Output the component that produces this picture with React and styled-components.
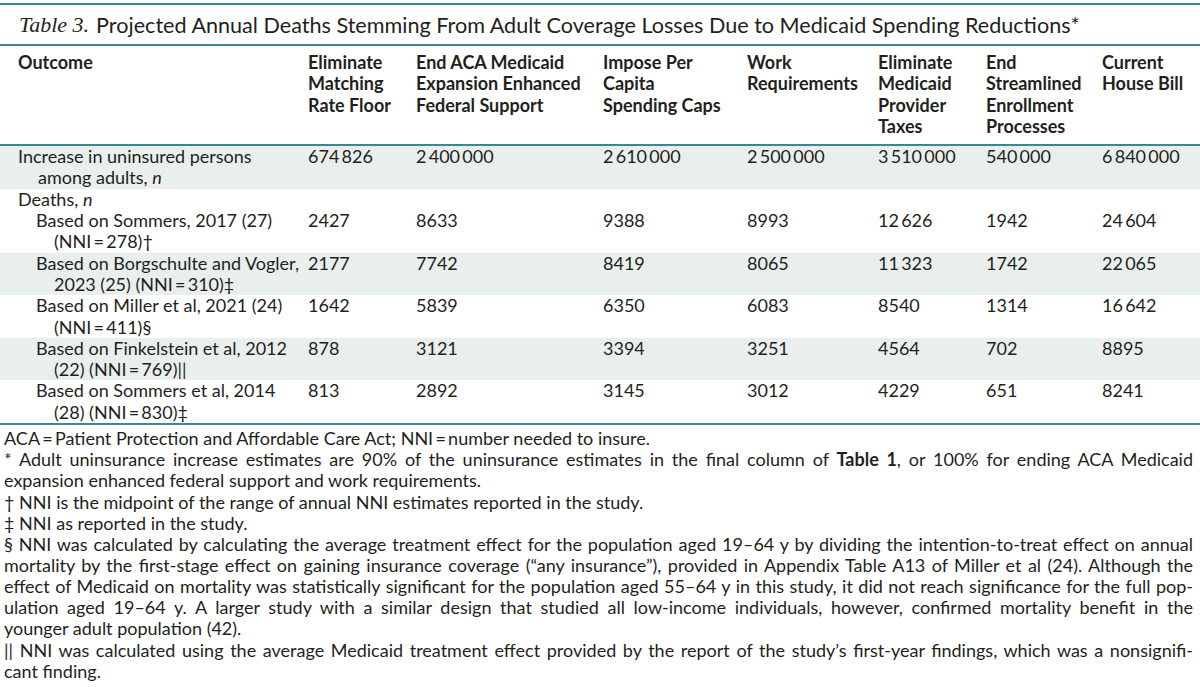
import React from 'react';
import styled, { createGlobalStyle } from 'styled-components';

const TEAL = '#3a8792';
const SHADE = '#e8efed';
const INK = '#231f20';

const Global = createGlobalStyle`
  html, body { margin: 0; padding: 0; background: #ffffff; }
  body { font-family: Lato, "Noto Sans", sans-serif; color: ${INK}; }
`;

const Page = styled.div`
  width: 1200px;
  padding-top: 3px;
`;

const Caption = styled.div`
  border-top: 2px solid ${TEAL};
  border-bottom: 2px solid ${TEAL};
  display: flex;
  align-items: center;
  gap: 7px;
  padding-left: 19px;
  font-size: 21.6px;
  box-sizing: border-box;
  height: 43px;
`;

const CaptionLabel = styled.span`
  font-family: "Liberation Serif", "DejaVu Serif", serif;
  font-style: italic;
  font-size: 22px;
`;

const Table = styled.table`
  width: 1200px;
  border-collapse: collapse;
  table-layout: fixed;
  font-size: 18px;
  line-height: 21.3px;
  border-bottom: 2px solid ${TEAL};
`;

const HeadCell = styled.th`
  text-align: left;
  vertical-align: top;
  font-weight: 700;
  padding: 6px 0 7px ${p => (p.$first ? '18px' : '0')};
  border-bottom: 2px solid ${TEAL};
`;

const Row = styled.tr`
  background: ${p => (p.$shaded ? SHADE : 'transparent')};
`;

const LabelCell = styled.td`
  vertical-align: top;
  padding: 0 0 0 ${p => p.$pad}px;
  text-indent: ${p => -p.$hang}px;
`;

const NumCell = styled.td`
  vertical-align: top;
  padding: 0;
  white-space: nowrap;
`;

const Notes = styled.div`
  padding: 3px 7px 0 4px;
  font-size: 18px;
  line-height: 21.15px;
`;

const NoteLine = styled.div`
  text-align: ${p => (p.$justify ? 'justify' : 'left')};
  text-align-last: ${p => (p.$justify ? 'justify' : 'left')};
  white-space: nowrap;
`;

const cols = [308, 108, 187, 144, 131, 108, 116, 98];

const headers = [
  ['Outcome'],
  ['Eliminate', 'Matching', 'Rate Floor'],
  ['End ACA Medicaid', 'Expansion Enhanced', 'Federal Support'],
  ['Impose Per', 'Capita', 'Spending Caps'],
  ['Work', 'Requirements'],
  ['Eliminate', 'Medicaid', 'Provider', 'Taxes'],
  ['End', 'Streamlined', 'Enrollment', 'Processes'],
  ['Current', 'House Bill'],
];

const T = '\u2009';

const rows = [
  {
    shaded: true,
    pad: 38,
    hang: 20,
    label: ['Increase in uninsured persons', <>among adults, <i>n</i></>],
    values: [`674${T}826`, `2${T}400${T}000`, `2${T}610${T}000`, `2${T}500${T}000`, `3${T}510${T}000`, `540${T}000`, `6${T}840${T}000`],
  },
  {
    pad: 18,
    hang: 0,
    label: [<>Deaths, <i>n</i></>],
    values: ['', '', '', '', '', '', ''],
  },
  {
    pad: 54,
    hang: 18,
    label: ['Based on Sommers, 2017 (27)', `(NNI${T}=${T}278)†`],
    values: ['2427', '8633', '9388', '8993', `12${T}626`, '1942', `24${T}604`],
  },
  {
    shaded: true,
    pad: 54,
    hang: 18,
    label: ['Based on Borgschulte and Vogler,', `2023 (25) (NNI${T}=${T}310)‡`],
    values: ['2177', '7742', '8419', '8065', `11${T}323`, '1742', `22${T}065`],
  },
  {
    pad: 54,
    hang: 18,
    label: ['Based on Miller et al, 2021 (24)', `(NNI${T}=${T}411)§`],
    values: ['1642', '5839', '6350', '6083', '8540', '1314', `16${T}642`],
  },
  {
    shaded: true,
    pad: 54,
    hang: 18,
    label: ['Based on Finkelstein et al, 2012', `(22) (NNI${T}=${T}769)||`],
    values: ['878', '3121', '3394', '3251', '4564', '702', '8895'],
  },
  {
    pad: 54,
    hang: 18,
    label: ['Based on Sommers et al, 2014', `(28) (NNI${T}=${T}830)‡`],
    values: ['813', '2892', '3145', '3012', '4229', '651', '8241'],
  },
];

const notes = [
  { text: `ACA${T}=${T}Patient Protection and Affordable Care Act; NNI${T}=${T}number needed to insure.` },
  {
    justify: true,
    text: (
      <>
        * Adult uninsurance increase estimates are 90% of the uninsurance estimates in the final column of <b>Table 1</b>, or 100% for ending ACA Medicaid
      </>
    ),
  },
  { text: 'expansion enhanced federal support and work requirements.' },
  { text: '† NNI is the midpoint of the range of annual NNI estimates reported in the study.' },
  { text: '‡ NNI as reported in the study.' },
  { justify: true, text: '§ NNI was calculated by calculating the average treatment effect for the population aged 19–64 y by dividing the intention-to-treat effect on annual' },
  { justify: true, text: 'mortality by the first-stage effect on gaining insurance coverage (“any insurance”), provided in Appendix Table A13 of Miller et al (24). Although the' },
  { justify: true, text: 'effect of Medicaid on mortality was statistically significant for the population aged 55–64 y in this study, it did not reach significance for the full pop-' },
  { justify: true, text: 'ulation aged 19–64 y. A larger study with a similar design that studied all low-income individuals, however, confirmed mortality benefit in the' },
  { text: 'younger adult population (42).' },
  { justify: true, text: '|| NNI was calculated using the average Medicaid treatment effect provided by the report of the study’s first-year findings, which was a nonsignifi-' },
  { text: 'cant finding.' },
];

const Lines = ({ lines }) =>
  lines.map((l, i) => (
    <React.Fragment key={i}>
      {i > 0 && <br />}
      {l}
    </React.Fragment>
  ));

export default function App() {
  return (
    <>
      <Global />
      <Page>
        <Caption>
          <CaptionLabel>Table 3.</CaptionLabel>
          <span>Projected Annual Deaths Stemming From Adult Coverage Losses Due to Medicaid Spending Reductions*</span>
        </Caption>
        <Table>
          <colgroup>
            {cols.map((w, i) => (
              <col key={i} style={{ width: w }} />
            ))}
          </colgroup>
          <thead>
            <tr>
              {headers.map((h, i) => (
                <HeadCell key={i} $first={i === 0}>
                  <Lines lines={h} />
                </HeadCell>
              ))}
            </tr>
          </thead>
          <tbody>
            {rows.map((r, i) => (
              <Row key={i} $shaded={r.shaded}>
                <LabelCell $pad={r.pad} $hang={r.hang}>
                  <Lines lines={r.label} />
                </LabelCell>
                {r.values.map((v, j) => (
                  <NumCell key={j}>{v}</NumCell>
                ))}
              </Row>
            ))}
          </tbody>
        </Table>
        <Notes>
          {notes.map((n, i) => (
            <NoteLine key={i} $justify={n.justify}>
              {n.text}
            </NoteLine>
          ))}
        </Notes>
      </Page>
    </>
  );
}
